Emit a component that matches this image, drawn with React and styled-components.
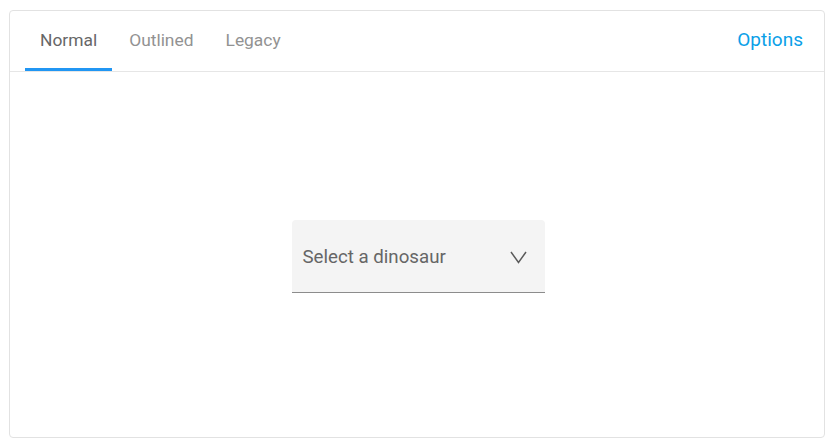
import styled, { createGlobalStyle } from 'styled-components'

const GlobalStyle = createGlobalStyle`
  html, body {
    margin: 0;
    padding: 0;
    background: #fff;
    font-family: Roboto, "Liberation Sans", sans-serif;
  }
  #root {
    padding: 10px 7px 10px 9px;
  }
`

const Card = styled.div`
  border: 1px solid #e2e2e2;
  border-radius: 4px;
  height: 428px;
  box-sizing: border-box;
  display: flex;
  flex-direction: column;
`

const Header = styled.div`
  display: flex;
  align-items: stretch;
  height: 61px;
  box-sizing: border-box;
  border-bottom: 1px solid #e6e6e6;
  padding: 0 21px 0 14px;
`

const Tabs = styled.div`
  display: flex;
  flex: 1;
`

const Tab = styled.div`
  position: relative;
  display: flex;
  align-items: center;
  padding: 0 16px 3px;
  font-size: 17.4px;
  font-weight: 400;
  color: ${p => (p.active ? '#676767' : '#929292')};
  cursor: pointer;

  &::after {
    content: '';
    display: ${p => (p.active ? 'block' : 'none')};
    position: absolute;
    left: 1px;
    right: 1px;
    bottom: 0;
    height: 3px;
    background: #2196f3;
  }
`

const OptionsLink = styled.div`
  display: flex;
  align-items: center;
  padding-bottom: 3px;
  font-size: 19px;
  color: #0aa0e8;
  cursor: pointer;
`

const Body = styled.div`
  flex: 1;
  display: flex;
  align-items: center;
  justify-content: center;
  padding: 4px 0 0 2px;
`

const SelectBox = styled.div`
  width: 253px;
  height: 73px;
  box-sizing: border-box;
  background: #f4f4f4;
  border-radius: 4px 4px 0 0;
  border-bottom: 1px solid #8c8c8c;
  display: flex;
  align-items: center;
  justify-content: space-between;
  padding: 2px 18px 0 11px;
  font-size: 18.7px;
  color: #666;
`

const Chevron = () => (
  <svg width="17" height="13" viewBox="0 0 17 13">
    <path d="M1 1 L8.5 11.5 L16 1" fill="none" stroke="#5a5a5a" strokeWidth="1.5" />
  </svg>
)

export default function App() {
  return (
    <>
      <GlobalStyle />
      <Card>
        <Header>
          <Tabs>
            <Tab active>Normal</Tab>
            <Tab>Outlined</Tab>
            <Tab>Legacy</Tab>
          </Tabs>
          <OptionsLink>Options</OptionsLink>
        </Header>
        <Body>
          <SelectBox>
            <span>Select a dinosaur</span>
            <Chevron />
          </SelectBox>
        </Body>
      </Card>
    </>
  )
}
